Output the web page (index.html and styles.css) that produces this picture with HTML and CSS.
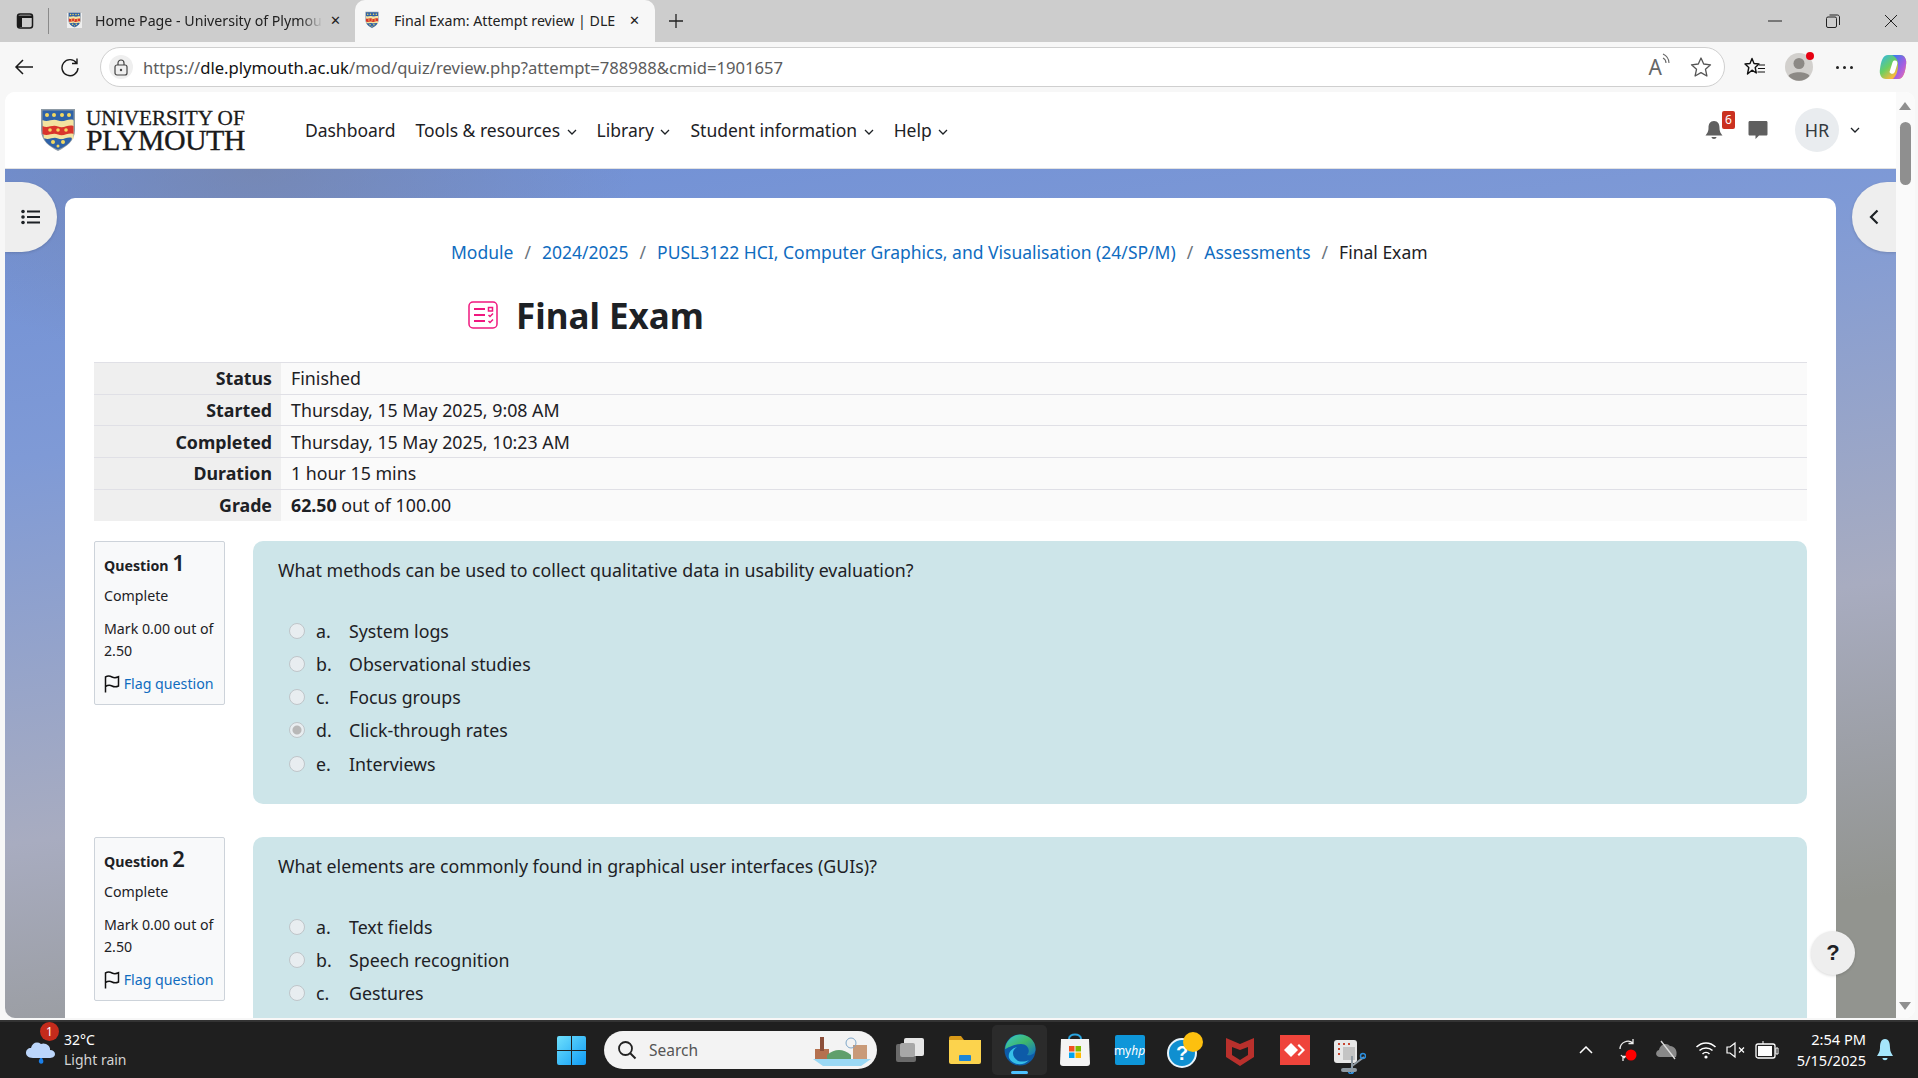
FILE: index.html
```html
<!doctype html>
<html>
<head>
    <title>Final Exam: Attempt review | DLE</title>
    <meta charset="utf-8"/>
    <link rel="stylesheet" href="styles.css">
</head>
<body>
<svg class="defs" width="0" height="0">
    <defs>
        <symbol id="shield" viewBox="0 0 36 44">
            <path d="M1 1H35V22C35 33 26 39 18 43C10 39 1 33 1 22Z" fill="#8d9aa5"/>
            <path d="M2.5 2.5H33.5V13H2.5Z" fill="#2e62a8"/>
            <path d="M2.5 12C8 15 12 10 18 12.5C24 15 28 10 33.5 12V31H4Z" fill="#f3e3a0"/>
            <path d="M2.5 18C8 21 12 16 18 18.5C24 21 28 16 33.5 18V26C28 24 24 29 18 26.5C12 24 8 29 2.5 26Z" fill="#d9352c"/>
            <path d="M4 30C9 33 13 28 18 30.5C23 33 27 28 32 30C30 36 24 39 18 41.5C12 39 6 36 4 30Z" fill="#2e62a8"/>
            <g fill="#f4d860">
                <circle cx="7" cy="7" r="2"/><circle cx="14" cy="7" r="2"/><circle cx="22" cy="7" r="2"/><circle cx="29" cy="7" r="2"/>
                <circle cx="13" cy="34" r="2"/><circle cx="23" cy="34" r="2"/><circle cx="18" cy="38" r="1.5"/>
                <circle cx="10" cy="22" r="1.8"/><circle cx="18" cy="22" r="1.8"/><circle cx="26" cy="22" r="1.8"/>
            </g>
        </symbol>
        <symbol id="flag" viewBox="0 0 16 18">
            <path d="M1.5 17.5V2C4 .5 6 1 8 2S12 3 14.5 1.8V11C12 12.2 10 12 8 11S4 10 1.5 11.5" fill="none" stroke="#111" stroke-width="1.5"/>
        </symbol>
        <symbol id="chev" viewBox="0 0 10 6">
            <path d="M1 1L5 5L9 1" fill="none" stroke="currentColor" stroke-width="1.3"/>
        </symbol>
        <linearGradient id="edgeg" x1="0" y1="0" x2="1" y2="1">
            <stop offset="0" stop-color="#37c6d0"/><stop offset=".5" stop-color="#3fb86a"/><stop offset="1" stop-color="#1171c4"/>
        </linearGradient>
        <linearGradient id="copg" x1="0" y1="0" x2="1" y2="1">
            <stop offset="0" stop-color="#2fb6f0"/><stop offset=".4" stop-color="#6bcf62"/><stop offset=".7" stop-color="#f7b93e"/><stop offset="1" stop-color="#ef5f6f"/>
        </linearGradient>
        <linearGradient id="copg2" x1="0" y1="0" x2="1" y2="1">
            <stop offset="0" stop-color="#2a7ff0"/><stop offset=".6" stop-color="#a65fe0"/><stop offset="1" stop-color="#ef6fb0"/>
        </linearGradient>
        <linearGradient id="wing" x1="0" y1="0" x2="1" y2="1">
            <stop offset="0" stop-color="#6fe0fc"/><stop offset="1" stop-color="#0f9bf5"/>
        </linearGradient>
    </defs>
</svg>

<!-- browser tabs -->
<div class="tabbar">
    <svg class="tab-actions" width="18" height="18" viewBox="0 0 18 18"><rect x="1.5" y="2" width="15" height="14" rx="2.5" fill="none" stroke="#1a1a1a" stroke-width="1.5"/><path d="M2 3.5H16V6H2ZM2 6H6V15H2Z" fill="#1a1a1a"/></svg>
    <span class="tab-sep"></span>
    <div class="tab first">
        <span class="favbox"><svg width="13" height="16"><use href="#shield"/></svg></span>
        <span class="tab-title fade">Home Page - University of Plymou</span>
        <span class="tab-x">&#10005;</span>
    </div>
    <div class="tab active">
        <svg width="14" height="18"><use href="#shield"/></svg>
        <span class="tab-title">Final Exam: Attempt review | DLE</span>
        <span class="tab-x">&#10005;</span>
    </div>
    <svg class="newtab" width="16" height="16" viewBox="0 0 16 16"><path d="M8 1V15M1 8H15" stroke="#222" stroke-width="1.3"/></svg>
    <div class="winctl">
        <svg width="14" height="14" viewBox="0 0 14 14"><path d="M0 7H14" stroke="#222"/></svg>
        <svg width="14" height="14" viewBox="0 0 14 14"><rect x=".5" y="3" width="10" height="10.5" rx="1.5" fill="none" stroke="#222"/><path d="M3.5 1H11.5C12.5 1 13.5 2 13.5 3V11" fill="none" stroke="#222"/></svg>
        <svg width="14" height="14" viewBox="0 0 14 14"><path d="M1 1L13 13M13 1L1 13" stroke="#222"/></svg>
    </div>
</div>

<!-- browser toolbar -->
<div class="toolbar">
    <svg class="tool-back" width="20" height="18" viewBox="0 0 20 18"><path d="M19 9H2M9 2L2 9L9 16" fill="none" stroke="#1a1a1a" stroke-width="1.5"/></svg>
    <svg class="tool-reload" width="20" height="20" viewBox="0 0 20 20"><path d="M16.5 6A8 8 0 1 0 18 11M17 1.5V6.5H12" fill="none" stroke="#1a1a1a" stroke-width="1.4"/></svg>
    <div class="address">
        <span class="lock"><svg width="14" height="17" viewBox="0 0 14 17"><rect x="1" y="6" width="12" height="10" rx="2" fill="none" stroke="#444" stroke-width="1.2"/><path d="M4 6V4A3 3 0 0 1 10 4V6" fill="none" stroke="#444" stroke-width="1.2"/><circle cx="7" cy="11" r="1.2" fill="#444"/></svg></span>
        <span class="url">https://<b>dle.plymouth.ac.uk</b>/mod/quiz/review.php?attempt=788988&amp;cmid=1901657</span>
        <span class="addr-read">A<svg width="10" height="14" viewBox="0 0 10 14"><path d="M1 1C5 3 7 6 7 10M1 5C3 6 4 8 4 10" fill="none" stroke="#666" stroke-width="1.1"/></svg></span>
        <svg width="22" height="22" viewBox="0 0 22 22"><path d="M11 2L13.7 8L20.5 8.8L15.5 13.3L16.9 20L11 16.6L5.1 20L6.5 13.3L1.5 8.8L8.3 8Z" fill="none" stroke="#555" stroke-width="1.3" stroke-linejoin="round"/></svg>
    </div>
    <svg class="tool-fav" width="22" height="20" viewBox="0 0 22 20"><path d="M8 1.5L10 6.5L15 7L11.2 10.5L12.3 16L8 13.2L3.5 17L4.8 10.5L1 7L6 6.5Z" fill="none" stroke="#111" stroke-width="1.4" stroke-linejoin="round"/><path d="M15 8H21M14 11.5H21M13.5 15H21" stroke="#111" stroke-width="1.2"/></svg>
    <span class="profile">
        <svg width="28" height="28" viewBox="0 0 28 28"><circle cx="14" cy="14" r="14" fill="#d2d0cd"/><circle cx="14" cy="10.5" r="5.5" fill="#8c8985"/><path d="M3.5 23C6 18 22 18 24.5 23A14 14 0 0 1 3.5 23Z" fill="#8c8985"/></svg>
        <i class="profile-dot"></i>
    </span>
    <span class="tool-dots"><i></i><i></i><i></i></span>
    <svg class="tool-copilot" width="28" height="28" viewBox="0 0 28 28"><path d="M9 2H21C26 2 28 7 27 12C26 20 24 26 19 26H7C2 26 0 21 1 16C2 8 4 2 9 2Z" fill="url(#copg)"/><path d="M13 2H21C26 2 28 7 27 12C26 20 24 26 19 26H14C18 22 19 17 19 12C19 7 17 4 13 2Z" fill="url(#copg2)"/><path d="M15 7.5C18 7 19 9 18 12L16 18.5C15 21.5 11.5 21.5 10.5 19L13 11C13.5 9 14 8 15 7.5Z" fill="#fff"/></svg>
</div>

<!-- browser viewport -->
<div class="viewport">
    <div class="page">
        <header class="site-head">
            <div class="logo">
                <svg width="36" height="44"><use href="#shield"/></svg>
                <div class="logo-text"><span>UNIVERSITY OF</span><span class="logo-big">PLYMOUTH</span></div>
            </div>
            <nav class="mainnav">
                <a>Dashboard</a>
                <a>Tools &amp; resources <svg width="10" height="6"><use href="#chev"/></svg></a>
                <a>Library <svg width="10" height="6"><use href="#chev"/></svg></a>
                <a>Student information <svg width="10" height="6"><use href="#chev"/></svg></a>
                <a>Help <svg width="10" height="6"><use href="#chev"/></svg></a>
            </nav>
            <div class="usernav">
                <span class="bell">
                    <svg width="18" height="20" viewBox="0 0 18 20"><path d="M9 1C5 1 3.5 4 3.5 8C3.5 12 2 13.5 .5 15.5H17.5C16 13.5 14.5 12 14.5 8C14.5 4 13 1 9 1Z" fill="#5f5f5f"/><path d="M6.5 17H11.5C11.5 19.5 6.5 19.5 6.5 17Z" fill="#5f5f5f"/></svg>
                    <b class="bell-count">6</b>
                </span>
                <svg class="msg" width="20" height="20" viewBox="0 0 20 20"><path d="M2 1H18C19 1 19.5 1.5 19.5 2.5V14C19.5 15 19 15.5 18 15.5H11L7.5 19V15.5H2C1 15.5 .5 15 .5 14V2.5C.5 1.5 1 1 2 1Z" fill="#5f5f5f"/></svg>
                <span class="avatar">HR</span>
                <svg class="avatar-chev" width="10" height="6"><use href="#chev"/></svg>
            </div>
        </header>

        <div class="band">
            <main class="card">
                <div class="crumbs">
                    <a>Module</a><i>/</i><a>2024/2025</a><i>/</i><a>PUSL3122 HCI, Computer Graphics, and Visualisation (24/SP/M)</a><i>/</i><a>Assessments</a><i>/</i><span>Final Exam</span>
                </div>
                <div class="title-row">
                    <svg width="30" height="28" viewBox="0 0 30 28"><rect x="1" y="1" width="28" height="26" rx="4" fill="none" stroke="#f0187f" stroke-width="1.5"/><path d="M6 8H17M6 14H17M6 20H17" stroke="#f0187f" stroke-width="1.8"/><path d="M20.5 6.5H24.5V10H20.5ZM20.5 14L22 15.5L25 12.5M20.5 20L22 21.5L25 18.5" fill="none" stroke="#f0187f" stroke-width="1.5"/></svg>
                    <h1>Final Exam</h1>
                </div>

                <table class="summary">
                    <tr><th>Status</th><td>Finished</td></tr>
                    <tr><th>Started</th><td>Thursday, 15 May 2025, 9:08 AM</td></tr>
                    <tr><th>Completed</th><td>Thursday, 15 May 2025, 10:23 AM</td></tr>
                    <tr><th>Duration</th><td>1 hour 15 mins</td></tr>
                    <tr><th>Grade</th><td><b>62.50</b> out of 100.00</td></tr>
                </table>

                <section class="que">
                    <div class="que-info">
                        <h3>Question <span>1</span></h3>
                        <p>Complete</p>
                        <p>Mark 0.00 out of 2.50</p>
                        <a><svg width="16" height="18"><use href="#flag"/></svg> Flag question</a>
                    </div>
                    <div class="que-body">
                        <p class="que-text">What methods can be used to collect qualitative data in usability evaluation?</p>
                        <div class="answer"><i class="radio"></i><span class="opt">a.</span>System logs</div>
                        <div class="answer"><i class="radio"></i><span class="opt">b.</span>Observational studies</div>
                        <div class="answer"><i class="radio"></i><span class="opt">c.</span>Focus groups</div>
                        <div class="answer"><i class="radio on"></i><span class="opt">d.</span>Click-through rates</div>
                        <div class="answer"><i class="radio"></i><span class="opt">e.</span>Interviews</div>
                    </div>
                </section>

                <section class="que">
                    <div class="que-info">
                        <h3>Question <span>2</span></h3>
                        <p>Complete</p>
                        <p>Mark 0.00 out of 2.50</p>
                        <a><svg width="16" height="18"><use href="#flag"/></svg> Flag question</a>
                    </div>
                    <div class="que-body">
                        <p class="que-text">What elements are commonly found in graphical user interfaces (GUIs)?</p>
                        <div class="answer"><i class="radio"></i><span class="opt">a.</span>Text fields</div>
                        <div class="answer"><i class="radio"></i><span class="opt">b.</span>Speech recognition</div>
                        <div class="answer"><i class="radio"></i><span class="opt">c.</span>Gestures</div>
                    </div>
                </section>
            </main>
        </div>

        <button class="drawer-left"><svg width="20" height="16" viewBox="0 0 20 16"><path d="M6 2.5H19M6 8H19M6 13.5H19" stroke="#1d2125" stroke-width="2.2"/><circle cx="2" cy="2.5" r="1.8" fill="#1d2125"/><circle cx="2" cy="8" r="1.8" fill="#1d2125"/><circle cx="2" cy="13.5" r="1.8" fill="#1d2125"/></svg></button>
        <button class="drawer-right"><svg width="10" height="16" viewBox="0 0 10 16"><path d="M8.5 1.5L2 8L8.5 14.5" fill="none" stroke="#1d2125" stroke-width="2.2"/></svg></button>
        <button class="help-btn">?</button>
    </div>
    <div class="scrollbar">
        <i class="arrow-up"></i>
        <i class="thumb"></i>
        <i class="arrow-down"></i>
    </div>
</div>

<!-- windows taskbar -->
<footer class="taskbar">
    <div class="weather">
        <svg width="32" height="30" viewBox="0 0 32 30"><path d="M16 22C18 24 19 26 18 28C16 30 13 28 14 25Z" fill="#1b7fe8"/><path d="M8 23C3 23 1 20 1 18C1 15 3 13 6 13C7 8 12 6 16 9C20 7 26 11 25 15C28 15 30 17 30 19C30 22 27 23 24 23Z" fill="#bcd6fb"/></svg>
        <b class="weather-badge">1</b>
        <div class="weather-text"><span>32°C</span><span class="dim">Light rain</span></div>
    </div>
    <div class="tb-center">
        <svg class="win" width="29" height="29" viewBox="0 0 29 29"><path d="M0 2Q0 0 2 0H14V14H0ZM15 0H27Q29 0 29 2V14H15ZM0 15H14V29H2Q0 29 0 27ZM15 15H29V27Q29 29 27 29H15Z" fill="url(#wing)"/></svg>
        <div class="search">
            <svg width="20" height="20" viewBox="0 0 20 20"><circle cx="8.5" cy="8.5" r="6.5" fill="none" stroke="#222" stroke-width="1.8"/><path d="M13 13L18.5 18.5" stroke="#222" stroke-width="2"/></svg>
            <span>Search</span>
            <svg class="search-pic" width="62" height="32" viewBox="0 0 62 32"><path d="M2 25H60L50 32H12Z" fill="#9ad8f4"/><rect x="4" y="15" width="14" height="10" fill="#b5714f"/><rect x="9" y="3" width="4" height="14" fill="#8c4f3a"/><path d="M16 21Q28 11 40 21V25H16Z" fill="#5f9f6c"/><rect x="42" y="11" width="14" height="14" fill="#c99a78"/><circle cx="40" cy="9" r="5" fill="none" stroke="#7fa7c9"/></svg>
        </div>
        <div class="tb-icons">
            <span class="tb-app"><svg width="30" height="30" viewBox="0 0 30 30"><rect x="1" y="9" width="20" height="18" rx="2" fill="#6a6a6a"/><rect x="9" y="3" width="20" height="18" rx="2" fill="#e6e6e6"/><rect x="5" y="8" width="15" height="14" rx="2" fill="#a8a8a8"/></svg></span>
            <span class="tb-app"><svg width="32" height="28" viewBox="0 0 32 28"><path d="M0 2Q0 0 2 0H12L15 4H0Z" fill="#d99a18"/><path d="M0 4H32V26Q32 28 30 28H2Q0 28 0 26Z" fill="#fcd34d"/><rect x="10" y="19" width="12" height="6" rx="1" fill="#1b86d8"/></svg></span>
            <span class="tb-app current"><svg width="32" height="32" viewBox="0 0 32 32"><circle cx="16" cy="16" r="15.5" fill="#0d5ba8"/><path d="M1 15C2 6 9 .5 16 .5C25 .5 31.5 7 31.5 15C31.5 20 27 22 23 21C27 17 24 10 17 10C9 10 4 14 1 15Z" fill="url(#edgeg)"/><path d="M9 19C9 26 17 30 25 26C20 32 9 32 5 24C4 20 6 15 13 13C10 15 9 17 9 19Z" fill="#36c0e8"/></svg><i class="run-dot"></i></span>
            <span class="tb-app"><svg width="30" height="34" viewBox="0 0 30 34"><path d="M9 6C9 0 21 0 21 6" fill="none" stroke="#2aa5e0" stroke-width="2"/><path d="M1 6H29L30 30Q30 33 27 33H3Q0 33 0 30Z" fill="#f4f4f4"/><rect x="9" y="13" width="5.5" height="5.5" fill="#f25022"/><rect x="15.5" y="13" width="5.5" height="5.5" fill="#7fba00"/><rect x="9" y="19.5" width="5.5" height="5.5" fill="#00a4ef"/><rect x="15.5" y="19.5" width="5.5" height="5.5" fill="#ffb900"/></svg></span>
            <span class="tb-app"><span class="myhp">my<i>hp</i></span></span>
            <span class="tb-app"><svg width="36" height="36" viewBox="0 0 36 36"><circle cx="15" cy="21" r="14" fill="#0f8fd0" stroke="#e8f4fb" stroke-width="2"/><text x="15" y="28" font-size="20" font-weight="700" font-family="Liberation Sans, sans-serif" text-anchor="middle" fill="#fff">?</text><circle cx="26" cy="10" r="10" fill="#fdc00f"/></svg></span>
            <span class="tb-app"><svg width="28" height="31" viewBox="0 0 28 31"><path d="M0 3L14 9L28 3V22L14 31L0 22Z" fill="#b9302c"/><path d="M6 12L14 15L22 12V20L14 25L6 20Z" fill="#1f1f1f"/></svg></span>
            <span class="tb-app"><span class="anyd"><svg width="22" height="14" viewBox="0 0 22 14"><path d="M7 0L14 7L7 14L0 7Z" fill="#fff"/><path d="M15 1L21 7L15 13L13.5 11.5L18 7L13.5 2.5Z" fill="#fff"/></svg></span></span>
            <span class="tb-app snip"><svg width="32" height="34" viewBox="0 0 32 34"><rect x="0" y="0" width="23" height="23" rx="3" fill="#e8e8e8"/><rect x="9" y="7" width="12" height="13" fill="#c4c4c4"/><path d="M4 3H6V5H4ZM9 3H11V5H9ZM14 3H16V5H14ZM4 8H6V10H4ZM4 13H6V15H4Z" fill="#c8452f"/><path d="M18 16V34M30 17L18 26" stroke="#8f9aa3" stroke-width="2"/><circle cx="29" cy="16" r="2.5" fill="none" stroke="#2a8fe0" stroke-width="1.5"/><circle cx="17" cy="31" r="2.5" fill="none" stroke="#2a8fe0" stroke-width="1.5"/><rect x="7" y="28" width="16" height="4" rx="2" fill="#8f9aa3"/></svg></span>
        </div>
    </div>
    <div class="tray">
        <svg class="t-caret" width="14" height="8" viewBox="0 0 14 8"><path d="M1 7L7 1L13 7" fill="none" stroke="#fff" stroke-width="1.5"/></svg>
        <svg class="t-sync" width="22" height="26" viewBox="0 0 22 26"><path d="M3 12A8 8 0 0 1 16 6M16 2V6.5H11.5M6 24V19.5H10.5M4 18A8 8 0 0 0 8 21" fill="none" stroke="#eee" stroke-width="1.3"/><circle cx="14" cy="18" r="5.5" fill="#f00"/></svg>
        <svg class="t-drive" width="24" height="20" viewBox="0 0 24 20"><path d="M5 17C0 17 0 11 4 10C5 4 12 2 15 6C20 6 23 11 21 17Z" fill="#888"/><path d="M6 1L20 19" stroke="#ddd" stroke-width="1.3"/></svg>
        <svg class="t-wifi" width="22" height="20" viewBox="0 0 22 20"><path d="M1.5 7C7 1.5 15 1.5 20.5 7M4.5 10.5C8 7 14 7 17.5 10.5M7.5 14C9.5 12 12.5 12 14.5 14" fill="none" stroke="#fff" stroke-width="1.5"/><circle cx="11" cy="17" r="1.6" fill="#fff"/></svg>
        <svg class="t-vol" width="20" height="18" viewBox="0 0 20 18"><path d="M1 6H4L9 2V16L4 12H1Z" fill="none" stroke="#fff" stroke-width="1.2"/><path d="M13 6.5L18 11.5M18 6.5L13 11.5" stroke="#fff" stroke-width="1.2"/></svg>
        <svg class="t-batt" width="24" height="20" viewBox="0 0 24 20"><rect x="1" y="4" width="19" height="14" rx="2" fill="none" stroke="#fff" stroke-width="1.3"/><rect x="3" y="6" width="14" height="10" fill="#fff"/><path d="M21 8H23V14H21ZM8 1V4" stroke="#fff"/></svg>
        <div class="clock"><span>2:54 PM</span><span>5/15/2025</span></div>
        <svg class="t-bell" width="18" height="24" viewBox="0 0 18 24"><path d="M9 1C5 1 4 5 4 10C4 14 2 16 1 18H17C16 16 14 14 14 10C14 5 13 1 9 1Z" fill="#a5e6fb"/><path d="M6.5 20H11.5C11.5 23 6.5 23 6.5 20Z" fill="#a5e6fb"/></svg>
    </div>
</footer>
</body>
</html>
```
FILE: styles.css
```css
* {
    box-sizing: border-box;
}
html, body {
    height: 100%;
}
body {
    margin: 0;
    display: flex;
    flex-direction: column;
    overflow: hidden;
    background-color: #f7f7f7;
    font-family: "Noto Sans", sans-serif;
    color: #1d2125;
}
.defs {
    position: absolute;
}
a {
    color: #0f6cbf;
}

/* browser tabs */
.tabbar {
    height: 42px;
    flex: none;
    display: flex;
    align-items: center;
    background-color: #cdcdcd;
    padding-left: 16px;
}
.tab-sep {
    width: 1px;
    height: 26px;
    margin: 0 18px 0 14px;
    background-color: #8a8a8a;
}
.tab {
    height: 42px;
    display: flex;
    align-items: center;
    gap: 9px;
    padding-bottom: 2px;
    font-size: 14.2px;
    color: #222;
}
.tab.first {
    width: 280px;
    gap: 7px;
    padding-right: 3px;
}
.favbox {
    width: 15px;
    height: 15px;
    display: flex;
    align-items: center;
    justify-content: center;
    background-color: #eee;
}
.tab svg {
    flex: none;
}
.tab-title {
    flex: 1;
    overflow: hidden;
    white-space: nowrap;
    margin-left: 6px;
}
.tab-title.fade {
    mask-image: linear-gradient(to right, #000 90%, transparent);
    -webkit-mask-image: linear-gradient(to right, #000 90%, transparent);
}
.tab-x {
    font-size: 13px;
    width: 14px;
    color: #222;
}
.tab.active {
    width: 300px;
    margin-left: 8px;
    padding-left: 10px;
    padding-right: 12px;
    border-radius: 10px 10px 0 0;
    background-color: #f7f7f7;
}
.newtab {
    margin-left: 13px;
}
.winctl {
    margin-left: auto;
    display: flex;
    gap: 44px;
    padding-right: 20px;
}

/* browser toolbar */
.toolbar {
    height: 50px;
    flex: none;
    display: flex;
    align-items: center;
    padding: 0 4px 0 14px;
    background-color: #f7f7f7;
}
.tool-reload {
    margin-left: 26px;
}
.address {
    width: 1625px;
    height: 40px;
    margin-left: 20px;
    display: flex;
    align-items: center;
    padding: 0 12px 0 8px;
    background-color: #fff;
    border: 1px solid #cfcfcf;
    border-radius: 20px;
}
.lock {
    width: 24px;
    height: 24px;
    display: flex;
    align-items: center;
    justify-content: center;
    border-radius: 50%;
    background-color: #efefef;
}
.url {
    margin-left: 10px;
    font-size: 16.62px;
    color: #5c5c5c;
}
.url b {
    font-weight: 400;
    color: #111;
}
.addr-read {
    margin-left: auto;
    margin-right: 18px;
    display: flex;
    font-size: 21px;
    color: #666;
}
.tool-fav {
    margin-left: 19px;
}
.profile {
    position: relative;
    width: 28px;
    height: 28px;
    margin-left: 19px;
}
.profile-dot {
    position: absolute;
    top: -1px;
    right: -1px;
    width: 8px;
    height: 8px;
    border-radius: 50%;
    background-color: #e60012;
}
.tool-dots {
    margin-left: 23px;
    display: flex;
    gap: 4px;
}
.tool-dots i {
    width: 3px;
    height: 3px;
    border-radius: 50%;
    background-color: #222;
}
.tool-copilot {
    margin-left: 26px;
}

/* browser viewport */
.viewport {
    flex: 1;
    min-height: 0;
    display: flex;
    margin: 0 3px 2px 5px;
    border-radius: 10px;
    overflow: hidden;
    background-color: #fff;
}
.page {
    position: relative;
    flex: 1;
    min-width: 0;
    overflow: hidden;
}
.scrollbar {
    width: 19px;
    flex: none;
    position: relative;
    background-color: #fafafa;
}
.thumb {
    position: absolute;
    top: 30px;
    left: 4px;
    width: 11px;
    height: 63px;
    border-radius: 6px;
    background-color: #8f8f8f;
}
.arrow-up, .arrow-down {
    position: absolute;
    left: 3px;
    border-left: 6px solid transparent;
    border-right: 6px solid transparent;
}
.arrow-up {
    top: 10px;
    border-bottom: 8px solid #8f8f8f;
}
.arrow-down {
    bottom: 8px;
    border-top: 8px solid #8f8f8f;
}

/* site header */
.site-head {
    height: 77px;
    display: flex;
    align-items: center;
    padding: 0 34px 0 35px;
    background-color: #fff;
    border-bottom: 1px solid #e2e2e2;
}
.logo {
    display: flex;
    align-items: center;
    gap: 10px;
}
.logo-text {
    display: flex;
    flex-direction: column;
    font-family: "Liberation Serif", serif;
    font-size: 21.2px;
    line-height: 19px;
    color: #1a1a1a;
    -webkit-text-stroke: .3px #1a1a1a;
}
.logo-big {
    font-size: 30px;
    line-height: 24px;
    letter-spacing: -.6px;
}
.mainnav {
    margin-left: 60px;
    display: flex;
    gap: 20px;
    font-size: 17.5px;
}
.mainnav a {
    color: #1d2125;
}
.mainnav svg {
    margin-left: 2px;
    vertical-align: 2px;
}
.usernav {
    margin-left: auto;
    display: flex;
    align-items: center;
}
.bell {
    position: relative;
    display: flex;
}
.bell-count {
    position: absolute;
    top: -9px;
    left: 17px;
    width: 13px;
    height: 18px;
    font-size: 12px;
    font-weight: 400;
    line-height: 18px;
    text-align: center;
    border-radius: 2px;
    color: #fff;
    background-color: #ca3120;
}
.msg {
    margin-left: 25px;
}
.avatar {
    width: 44px;
    height: 44px;
    margin-left: 27px;
    display: flex;
    align-items: center;
    justify-content: center;
    border-radius: 50%;
    font-size: 18px;
    color: #343a40;
    background-color: #e9ecef;
}
.avatar-chev {
    margin-left: 11px;
    margin-right: 2px;
    color: #1d2125;
}

/* page body */
.band {
    height: 900px;
    padding: 29px 60px 0 60px;
    background:
        radial-gradient(ellipse 380px 200px at 250px 0, rgba(120, 130, 160, .6), transparent),
        linear-gradient(172deg, #6f8fd5 0%, #7f9ad6 25%, #a8acc0 58%, #92948f 85%);
}
.card {
    height: 100%;
    padding: 0 29px;
    border-radius: 10px 10px 0 0;
    background-color: #fff;
}
.crumbs {
    padding: 41px 0 0 357px;
    display: flex;
    align-items: center;
    gap: 11px;
    font-size: 17.5px;
    line-height: 26px;
    white-space: nowrap;
}
.crumbs i {
    font-style: normal;
    color: #6a737b;
}
.title-row {
    margin: 24px 0 0 374px;
    height: 52px;
    display: flex;
    align-items: center;
    gap: 18px;
}
.title-row h1 {
    margin: 0;
    font-size: 35px;
    font-weight: 700;
}
.summary {
    width: 100%;
    margin-top: 21px;
    border-collapse: collapse;
    font-size: 17.8px;
}
.summary th, .summary td {
    height: 31.7px;
    padding: 0 9px;
    border-top: 1px solid #e0e0e6;
    line-height: 22px;
}
.summary th {
    width: 187px;
    text-align: right;
    background-color: #efefef;
}
.summary td {
    padding-left: 10px;
    background-color: #fafafa;
}

/* questions */
.que {
    display: flex;
    align-items: flex-start;
    gap: 28px;
    margin-top: 20px;
    margin-bottom: 33px;
}
.que-info {
    width: 131px;
    height: 164px;
    flex: none;
    padding: 7px 9px;
    border: 1px solid #cdd3da;
    border-radius: 2px;
    background-color: #f8f9fa;
    font-size: 14.2px;
    line-height: 22px;
}
.que-info h3 {
    margin: 0 0 6px;
    font-size: 14.2px;
    font-weight: 700;
    line-height: 26px;
}
.que-info h3 span {
    font-size: 22px;
    font-weight: 600;
}
.que-info p {
    margin: 0 0 11px;
}
.que-info a {
    display: block;
    white-space: nowrap;
}
.que-info a svg {
    vertical-align: -4px;
}
.que-body {
    flex: 1;
    height: 263px;
    padding: 15px 25px;
    border-radius: 10px;
    background-color: #cde5e9;
    font-size: 17.8px;
}
.que-text {
    margin: 0 0 30px;
    line-height: 28px;
}
.answer {
    height: 33.25px;
    display: flex;
    align-items: center;
    padding-left: 11px;
}
.radio {
    width: 16px;
    height: 16px;
    margin-right: 11px;
    border: 1px solid #bfc5c9;
    border-radius: 50%;
    background-color: #e8edf0;
}
.radio.on {
    background: radial-gradient(circle, #b8b8b8 0 4px, #e8edf0 5px);
}
.opt {
    width: 33px;
}

/* buttons over the page */
.drawer-left, .drawer-right, .help-btn {
    position: absolute;
    display: flex;
    align-items: center;
    justify-content: center;
    border: 0;
    padding: 0;
    background-color: #eee;
    box-shadow: 0 1px 3px rgba(0, 0, 0, .15);
}
.drawer-left {
    top: 90px;
    left: 0;
    width: 52px;
    height: 70px;
    border-radius: 0 35px 35px 0;
}
.drawer-right {
    top: 90px;
    right: 0;
    width: 44px;
    height: 70px;
    border-radius: 35px 0 0 35px;
}
.help-btn {
    top: 839px;
    right: 41px;
    width: 44px;
    height: 44px;
    border-radius: 50%;
    font-family: "Liberation Sans", sans-serif;
    font-size: 22px;
    font-weight: 700;
    color: #1d2125;
}

/* taskbar */
.taskbar {
    height: 58px;
    flex: none;
    display: flex;
    align-items: center;
    position: relative;
    border-top: 2px solid #333;
    background-color: #1f1f1f;
    color: #fff;
}
.weather {
    position: relative;
    width: 557px;
    display: flex;
    align-items: center;
    padding-left: 25px;
    gap: 7px;
}
.weather-badge {
    position: absolute;
    top: -8px;
    left: 40px;
    width: 19px;
    height: 19px;
    border-radius: 50%;
    font-size: 12px;
    font-weight: 400;
    line-height: 19px;
    text-align: center;
    background-color: #c42b1c;
}
.weather-text {
    display: flex;
    flex-direction: column;
    font-size: 14px;
    line-height: 20px;
}
.dim {
    color: #d4d4d4;
}
.tb-center {
    display: flex;
    align-items: center;
}
.search {
    width: 273px;
    height: 38px;
    margin-left: 18px;
    display: flex;
    align-items: center;
    padding: 0 4px 0 13px;
    border-radius: 19px;
    background-color: #f3f3f3;
    font-size: 15.5px;
    color: #555;
}
.search span {
    margin-left: 12px;
}
.search-pic {
    margin-left: auto;
}
.tb-icons {
    display: flex;
    margin-left: 5px;
}
.tb-app {
    position: relative;
    width: 55px;
    height: 50px;
    display: flex;
    align-items: center;
    justify-content: center;
}
.tb-app.current {
    border-radius: 5px;
    background-color: #2b2b2b;
}
.run-dot {
    position: absolute;
    bottom: 1px;
    left: 19px;
    width: 17px;
    height: 3px;
    border-radius: 2px;
    background-color: #4cc2ff;
}
.myhp {
    width: 30px;
    height: 30px;
    display: flex;
    align-items: center;
    justify-content: center;
    border-radius: 2px;
    font-size: 12px;
    background-color: #0e96d9;
}
.anyd {
    width: 30px;
    height: 30px;
    display: flex;
    align-items: center;
    justify-content: center;
    background-color: #ef443b;
}
.snip {
    padding-top: 14px;
}
.tray {
    position: absolute;
    right: 0;
    top: 0;
    height: 100%;
    width: 339px;
    display: flex;
    align-items: center;
}
.t-sync {
    margin-left: 24px;
}
.t-drive {
    margin-left: 16px;
}
.t-wifi {
    margin-left: 16px;
}
.t-vol {
    margin-left: 9px;
}
.t-batt {
    margin-left: 9px;
}
.clock {
    width: 82px;
    margin-left: 5px;
    display: flex;
    flex-direction: column;
    align-items: flex-end;
    font-size: 14.6px;
    line-height: 21px;
}
.t-bell {
    margin-left: 10px;
}
```
